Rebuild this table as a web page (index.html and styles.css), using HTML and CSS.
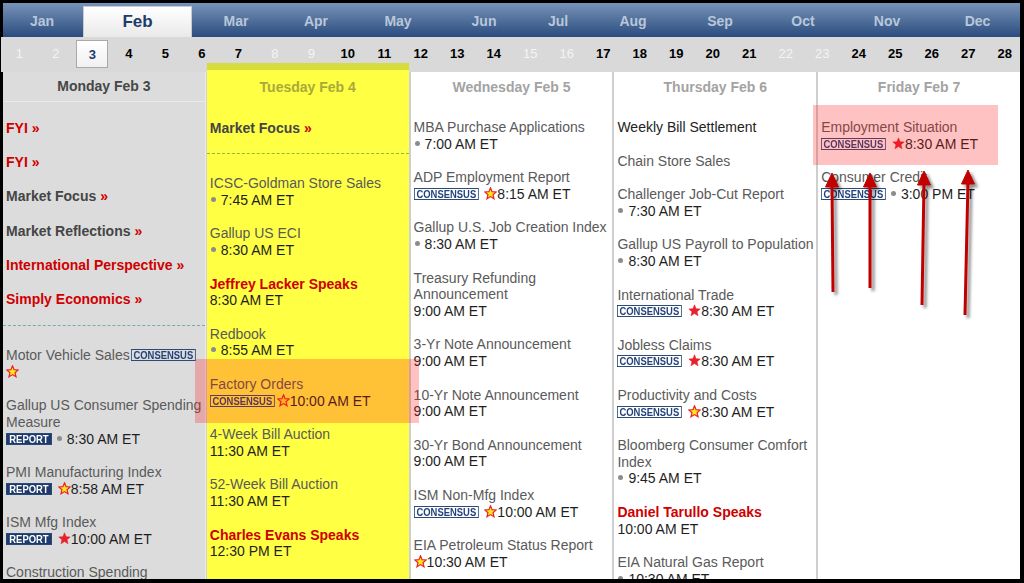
FILE: index.html
```html
<!DOCTYPE html>
<html>
<head>
<meta charset="utf-8">
<link rel="stylesheet" href="styles.css">
</head>
<body>
<svg width="0" height="0" class="defs">
  <defs>
    <symbol id="star" viewBox="0 0 24 24">
      <polygon points="12,1.5 14.9,8.6 22.5,9.2 16.7,14.2 18.5,21.8 12,17.7 5.5,21.8 7.3,14.2 1.5,9.2 9.1,8.6"/>
    </symbol>
  </defs>
</svg>
<div class="frame">
  <div class="months">
    <span class="mo">Jan</span>
    <span class="mo cur">Feb</span>
    <span class="mo">Mar</span>
    <span class="mo">Apr</span>
    <span class="mo">May</span>
    <span class="mo">Jun</span>
    <span class="mo">Jul</span>
    <span class="mo">Aug</span>
    <span class="mo">Sep</span>
    <span class="mo">Oct</span>
    <span class="mo">Nov</span>
    <span class="mo">Dec</span>
  </div>
  <div class="days">
    <span class="d we">1</span><span class="d we">2</span><span class="d sel">3</span><span class="d">4</span><span class="d">5</span><span class="d">6</span><span class="d">7</span>
    <span class="d we">8</span><span class="d we">9</span><span class="d">10</span><span class="d">11</span><span class="d">12</span><span class="d">13</span><span class="d">14</span>
    <span class="d we">15</span><span class="d we">16</span><span class="d">17</span><span class="d">18</span><span class="d">19</span><span class="d">20</span><span class="d">21</span>
    <span class="d we">22</span><span class="d we">23</span><span class="d">24</span><span class="d">25</span><span class="d">26</span><span class="d">27</span><span class="d">28</span>
  </div>
  <div class="cols">
    <div class="col mon">
      <div class="hdr">Monday Feb 3</div>
      <div class="body">
        <div class="lnk red">FYI <b class="q">»</b></div>
        <div class="lnk red">FYI <b class="q">»</b></div>
        <div class="lnk">Market Focus <b class="q">»</b></div>
        <div class="lnk">Market Reflections <b class="q">»</b></div>
        <div class="lnk red">International Perspective <b class="q">»</b></div>
        <div class="lnk red">Simply Economics <b class="q">»</b></div>
        <div class="dash"></div>
        <div class="ev">
          <div class="t">Motor Vehicle Sales<span class="cons">CONSENSUS</span></div>
          <div class="m"><svg class="star y first"><use href="#star"/></svg></div>
        </div>
        <div class="ev">
          <div class="t">Gallup US Consumer Spending</div>
          <div class="t">Measure</div>
          <div class="m"><span class="rep">REPORT</span> <i class="dot"></i>8:30 AM ET</div>
        </div>
        <div class="ev">
          <div class="t">PMI Manufacturing Index</div>
          <div class="m"><span class="rep">REPORT</span> <svg class="star y"><use href="#star"/></svg>8:58 AM ET</div>
        </div>
        <div class="ev">
          <div class="t">ISM Mfg Index</div>
          <div class="m"><span class="rep">REPORT</span> <svg class="star r"><use href="#star"/></svg>10:00 AM ET</div>
        </div>
        <div class="ev">
          <div class="t">Construction Spending</div>
          <div class="m"><span class="cons">CONSENSUS</span> <svg class="star y"><use href="#star"/></svg>10:00 AM ET</div>
        </div>
      </div>
    </div>
    <div class="col tue">
      <div class="hdr">Tuesday Feb 4</div>
      <div class="body">
        <div class="lnk">Market Focus <b class="q">»</b></div>
        <div class="dash"></div>
        <div class="ev">
          <div class="t">ICSC-Goldman Store Sales</div>
          <div class="m"><i class="dot"></i>7:45 AM ET</div>
        </div>
        <div class="ev">
          <div class="t">Gallup US ECI</div>
          <div class="m"><i class="dot"></i>8:30 AM ET</div>
        </div>
        <div class="ev">
          <div class="t sp">Jeffrey Lacker Speaks</div>
          <div class="m">8:30 AM ET</div>
        </div>
        <div class="ev">
          <div class="t">Redbook</div>
          <div class="m"><i class="dot"></i>8:55 AM ET</div>
        </div>
        <div class="ev">
          <div class="t">Factory Orders</div>
          <div class="m"><span class="cons">CONSENSUS</span><svg class="star y"><use href="#star"/></svg>10:00 AM ET</div>
        </div>
        <div class="ev">
          <div class="t">4-Week Bill Auction</div>
          <div class="m">11:30 AM ET</div>
        </div>
        <div class="ev">
          <div class="t">52-Week Bill Auction</div>
          <div class="m">11:30 AM ET</div>
        </div>
        <div class="ev">
          <div class="t sp">Charles Evans Speaks</div>
          <div class="m">12:30 PM ET</div>
        </div>
      </div>
    </div>
    <div class="col">
      <div class="hdr">Wednesday Feb 5</div>
      <div class="body">
        <div class="ev">
          <div class="t">MBA Purchase Applications</div>
          <div class="m"><i class="dot"></i>7:00 AM ET</div>
        </div>
        <div class="ev">
          <div class="t">ADP Employment Report</div>
          <div class="m"><span class="cons">CONSENSUS</span> <svg class="star y"><use href="#star"/></svg>8:15 AM ET</div>
        </div>
        <div class="ev">
          <div class="t">Gallup U.S. Job Creation Index</div>
          <div class="m"><i class="dot"></i>8:30 AM ET</div>
        </div>
        <div class="ev">
          <div class="t">Treasury Refunding</div>
          <div class="t">Announcement</div>
          <div class="m">9:00 AM ET</div>
        </div>
        <div class="ev">
          <div class="t">3-Yr Note Announcement</div>
          <div class="m">9:00 AM ET</div>
        </div>
        <div class="ev">
          <div class="t">10-Yr Note Announcement</div>
          <div class="m">9:00 AM ET</div>
        </div>
        <div class="ev">
          <div class="t">30-Yr Bond Announcement</div>
          <div class="m">9:00 AM ET</div>
        </div>
        <div class="ev">
          <div class="t">ISM Non-Mfg Index</div>
          <div class="m"><span class="cons">CONSENSUS</span> <svg class="star y"><use href="#star"/></svg>10:00 AM ET</div>
        </div>
        <div class="ev">
          <div class="t">EIA Petroleum Status Report</div>
          <div class="m"><svg class="star y first"><use href="#star"/></svg>10:30 AM ET</div>
        </div>
      </div>
    </div>
    <div class="col">
      <div class="hdr">Thursday Feb 6</div>
      <div class="body">
        <div class="ev">
          <div class="t dark">Weekly Bill Settlement</div>
        </div>
        <div class="ev">
          <div class="t">Chain Store Sales</div>
        </div>
        <div class="ev">
          <div class="t">Challenger Job-Cut Report</div>
          <div class="m"><i class="dot"></i>7:30 AM ET</div>
        </div>
        <div class="ev">
          <div class="t">Gallup US Payroll to Population</div>
          <div class="m"><i class="dot"></i>8:30 AM ET</div>
        </div>
        <div class="ev">
          <div class="t">International Trade</div>
          <div class="m"><span class="cons">CONSENSUS</span> <svg class="star r"><use href="#star"/></svg>8:30 AM ET</div>
        </div>
        <div class="ev">
          <div class="t">Jobless Claims</div>
          <div class="m"><span class="cons">CONSENSUS</span> <svg class="star r"><use href="#star"/></svg>8:30 AM ET</div>
        </div>
        <div class="ev">
          <div class="t">Productivity and Costs</div>
          <div class="m"><span class="cons">CONSENSUS</span> <svg class="star y"><use href="#star"/></svg>8:30 AM ET</div>
        </div>
        <div class="ev">
          <div class="t">Bloomberg Consumer Comfort</div>
          <div class="t">Index</div>
          <div class="m"><i class="dot"></i>9:45 AM ET</div>
        </div>
        <div class="ev">
          <div class="t sp">Daniel Tarullo Speaks</div>
          <div class="m">10:00 AM ET</div>
        </div>
        <div class="ev">
          <div class="t">EIA Natural Gas Report</div>
          <div class="m"><i class="dot"></i>10:30 AM ET</div>
        </div>
      </div>
    </div>
    <div class="col">
      <div class="hdr">Friday Feb 7</div>
      <div class="body">
        <div class="ev">
          <div class="t">Employment Situation</div>
          <div class="m"><span class="cons">CONSENSUS</span> <svg class="star r"><use href="#star"/></svg>8:30 AM ET</div>
        </div>
        <div class="ev">
          <div class="t">Consumer Credit</div>
          <div class="m"><span class="cons">CONSENSUS</span> <i class="dot"></i>3:00 PM ET</div>
        </div>
      </div>
    </div>
  </div>
  <div class="hl hl-factory"></div>
  <div class="hl hl-emp"></div>
  <svg class="arrows" width="1024" height="583" viewBox="0 0 1024 583">
    <defs>
      <filter id="sh" x="-50%" y="-20%" width="200%" height="140%">
        <feDropShadow dx="3" dy="3" stdDeviation="1.5" flood-color="#000" flood-opacity="0.45"/>
      </filter>
    </defs>
    <g filter="url(#sh)" fill="#c00000" stroke="#c00000">
      <line x1="833" y1="292" x2="832" y2="184" stroke-width="3"/>
      <polygon points="832,173 825.5,187 838.5,187" stroke-width="1"/>
      <line x1="870" y1="288" x2="870" y2="184" stroke-width="3"/>
      <polygon points="870,173 863.5,187 876.5,187" stroke-width="1"/>
      <line x1="922" y1="305" x2="924" y2="182" stroke-width="3"/>
      <polygon points="924,171 917.5,185 930.5,185" stroke-width="1"/>
      <line x1="965" y1="315" x2="968" y2="181" stroke-width="3"/>
      <polygon points="968,170 961.5,184 974.5,184" stroke-width="1"/>
    </g>
  </svg>
</div>
</body>
</html>
```

FILE: styles.css
```css
* { box-sizing: border-box; }
html, body { margin: 0; padding: 0; background: #000; }
.defs { position: absolute; }
.frame {
  position: relative;
  width: 1024px;
  height: 583px;
  padding: 3px 4px 4px 3px;
  background: #000;
  overflow: hidden;
  font-family: "Liberation Sans", Arial, sans-serif;
}
.months {
  display: grid;
  grid-template-columns: 78px 111px 88px 72px 92px 80px 68px 82px 92px 74px 94px 87px;
  height: 34px;
  background: linear-gradient(#7793b8, #2a4c7e);
}
.mo {
  display: flex;
  align-items: center;
  justify-content: center;
  color: #b9c7da;
  font-weight: bold;
  font-size: 14px;
  padding-top: 1px;
}
.mo.cur {
  margin-top: 3px;
  margin-left: 2px;
  background: linear-gradient(#ffffff, #e9e9e9);
  border: 1px solid #c8ccd2;
  border-bottom: none;
  color: #1e3c6c;
  font-size: 17px;
  padding-top: 0;
}
.days {
  display: grid;
  grid-template-columns: repeat(28, 36.5px);
  height: 35px;
  margin-left: -2px;
  background: #d9d9d9;
  align-items: start;
}
.d {
  text-align: center;
  font-weight: bold;
  font-size: 13px;
  color: #000;
  line-height: 15px;
  padding-top: 9px;
}
.d.we { color: #f4f4f4; font-weight: normal; }
.d.sel {
  justify-self: center;
  width: 32px;
  height: 28px;
  margin-top: 3px;
  padding-top: 6px;
  background: linear-gradient(#ffffff, #f1f1f1);
  border: 1px solid #a9a9a9;
  color: #1e3c6c;
}
.cols {
  display: grid;
  grid-template-columns: repeat(5, 1fr);
  column-gap: 2px;
  height: 507px;
  background: #cfcfcf;
}
.col {
  background: #fff;
  overflow: hidden;
  min-width: 0;
}
.col.mon { background: #dcdcdc; border-right: 1px solid #ececec; margin-right: -1px; }
.col.tue {
  margin-top: -9px;
  border-top: 7px solid #d6dc3e;
  background: #ffff44;
}
.hdr {
  height: 30px;
  line-height: 30px;
  text-align: center;
  font-weight: bold;
  font-size: 14px;
  color: #a3a3a3;
}
.mon .hdr { color: #474747; border-bottom: 1px solid #ebebeb; height: 30px; line-height: 29px; }
.tue .hdr { color: #a9a93a; height: 32px; line-height: 34px; }
.body { padding: 17px 0 0 3px; }
.mon .body, .tue .body { padding-top: 18px; }
.lnk {
  font-weight: bold;
  font-size: 14px;
  line-height: 17px;
  color: #454545;
  margin-bottom: 17.2px;
  white-space: nowrap;
}
.lnk.red { color: #d00000; }
.q { color: #d00000; }
.dash {
  height: 0;
  border-top: 1px dashed #78aab0;
  margin: 0 0 21px -3px;
}
.tue .dash { border-top-color: #86bd3a; margin-top: -1px; margin-bottom: 21px; }
.mon .dash { margin-top: 2px; margin-bottom: 21px; }
.ev {
  margin-bottom: 17px;
  font-size: 14px;
  line-height: 16.6px;
}
.t { color: #5a5a5a; white-space: nowrap; }
.t.dark { color: #222; }
.t.sp { color: #d00000; font-weight: bold; }
.m { color: #1e1e1e; white-space: nowrap; }
.cons, .rep {
  display: inline-block;
  font-weight: bold;
  font-size: 11.5px;
  line-height: 10px;
  height: 12px;
  vertical-align: 1px;
  border: 1px solid #2b4a7a;
  padding: 0 2px;
  transform: scaleX(0.82);
  transform-origin: left center;
}
.cons { color: #23427a; background: transparent; margin-right: -14px; }
.col .t .cons { margin-left: 1px; }
.rep {
  background: #1d3a6c;
  color: #fff;
  padding: 0 3px;
  margin-right: -10px;
}
.star {
  display: inline-block;
  width: 13px;
  height: 13px;
  vertical-align: -1px;
  margin-left: 2px;
}
.star.first { margin-left: 0; }
.star.y { fill: #ffe81a; stroke: #e8242a; stroke-width: 2.2px; }
.star.r { fill: #e8202a; stroke: #e8202a; stroke-width: 1px; }
.dot {
  display: inline-block;
  width: 5px;
  height: 5px;
  border-radius: 50%;
  background: #8c8c8c;
  vertical-align: 3px;
  margin: 0 5px 0 1px;
}
.hl {
  position: absolute;
  background: rgba(255, 20, 20, 0.26);
  pointer-events: none;
}
.hl-factory { left: 195px; top: 359px; width: 224px; height: 64px; }
.hl-emp { left: 813px; top: 105px; width: 185px; height: 60px; }
.arrows {
  position: absolute;
  left: 0;
  top: 0;
  pointer-events: none;
}
```
